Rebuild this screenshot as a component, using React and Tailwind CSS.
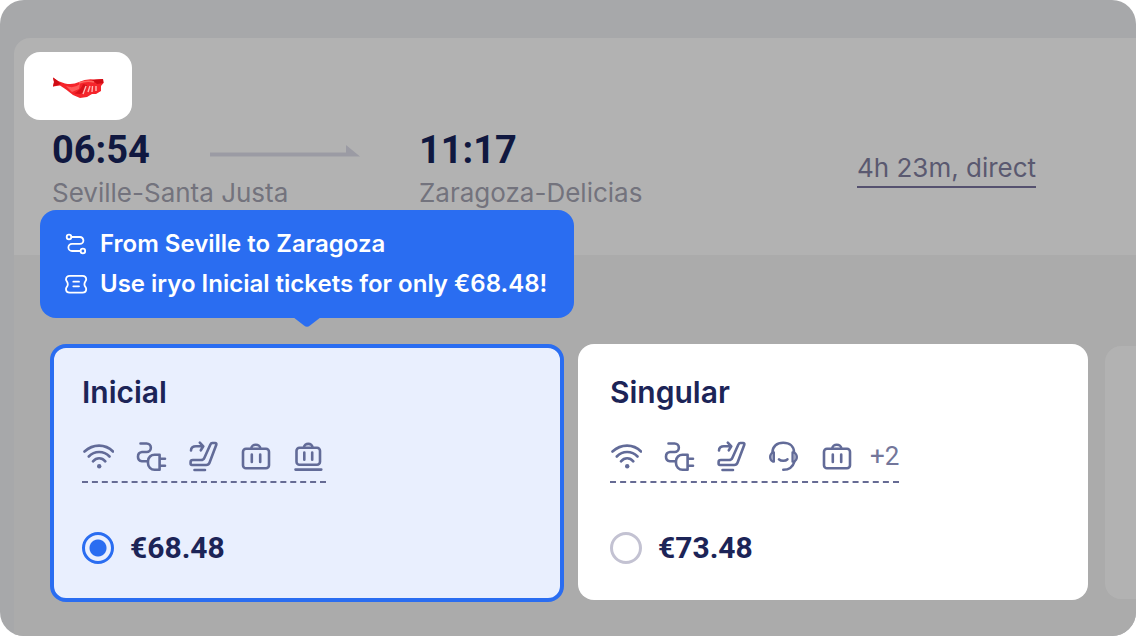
import React from "react";

const stroke = {
  fill: "none",
  stroke: "currentColor",
  strokeWidth: 2.6,
  strokeLinecap: "round",
  strokeLinejoin: "round",
};

function Icon({ children }) {
  return (
    <svg viewBox="0 0 32 32" className="size-8 shrink-0" aria-hidden="true" {...stroke}>
      {children}
    </svg>
  );
}

const Wifi = () => (
  <Icon>
    <path d="M2.500 11.500C11 3.600 23.300 3.600 31 11.500M6.800 16.500C12.500 10.400 21.800 10.400 27.500 16.500M11 21.300C14.500 17.300 19.800 17.300 23.300 21.300" />
    <circle cx="17.200" cy="26.200" r="2.200" fill="currentColor" stroke="none" />
  </Icon>
);

const Plug = () => (
  <Icon>
    <path d="M5.500 3.500H11.600A4.200 4.200 0 0 1 11.600 12H7A4.700 4.700 0 0 0 7 21.300H12.700" />
    <path d="M24.600 14.700H19.500A6.500 6.500 0 0 0 13 21V23.200A6.500 6.500 0 0 0 19.500 29.700H24.600ZM24.600 18.700H30M24.600 25.700H30" />
  </Icon>
);

const Seat = () => (
  <Icon>
    <path d="M3 10.500C3 7.700 5 6.300 8 6.300H15M11.800 2.700L15.300 6.300L12.800 10.300" />
    <path d="M22.500 4.200Q23 3 24.300 3H27Q28.800 3.200 28.300 4.800L21.500 22.800Q20.700 25 18.300 25H3.800Q2.600 25 2.600 23.800V22Q2.600 20 4.800 20H13Q15.500 20 16.300 18ZM6.500 30H17" />
  </Icon>
);

const Bag = () => (
  <Icon>
    <rect x="2" y="8.700" width="26" height="19.500" rx="3" />
    <path d="M10.300 8.500C10.300 3.500 19.300 3.500 19.300 8.500M10.800 14.500V22M19.200 14.500V22" />
  </Icon>
);

const SmallBag = () => (
  <Icon>
    <rect x="2.500" y="7.700" width="23.500" height="17" rx="3" />
    <path d="M10 7.500C10 2.600 18.500 2.600 18.500 7.500M10.300 12.500V19.800M18.200 12.500V19.800M1.500 29.600H27.300" />
  </Icon>
);

const Headset = () => (
  <Icon>
    <path d="M3.500 12.500C3.500 6 8 2.800 14.200 2.800S25 6 25 12.500M25.500 21.500C24 26.500 20 29.800 14.300 29.800" />
    <path d="M10 19.300C12 21.300 16.500 21.300 18.400 19.300" />
    <path d="M5 12.300H3.800Q1 14 1 17T3.800 21.700H5ZM23.400 12.300H25Q28 14 28 17T25 21.700H23.400Z" fill="currentColor" fillOpacity=".6" strokeWidth="2" />
  </Icon>
);

function RouteIcon() {
  return (
    <svg viewBox="0 0 24 24" className="size-6 shrink-0" aria-hidden="true" {...stroke} strokeWidth="1.8">
      <circle cx="5" cy="5" r="2.300" />
      <circle cx="18.900" cy="19" r="2.300" />
      <path d="M7.600 5H16A3.400 3.400 0 0 1 16 11.800H8A3.600 3.600 0 0 0 8 19H16.300" />
    </svg>
  );
}

function TicketIcon() {
  return (
    <svg viewBox="0 0 24 24" className="size-6 shrink-0" aria-hidden="true" {...stroke} strokeWidth="1.800">
      <path d="M5.800 3.800H18.500C21 3.800 22.200 5.400 22.200 7.400C22.200 9 20.400 9.800 20.400 12.200S22.200 15.400 22.200 17C22.200 19 21 20.600 18.500 20.600H5.800C3.300 20.600 2 19 2 17C2 15.400 3.800 14.600 3.800 12.200S2 9 2 7.400C2 5.400 3.300 3.800 5.800 3.800ZM9.300 9.700H15M9.300 14.300H15" />
    </svg>
  );
}

function OperatorLogo() {
  return (
    <svg viewBox="0 0 52 22" className="w-[52px]" role="img" aria-label="iryo">
      <path
        d="M1 0.500L6 4L13 6.500Q21 8 27 5Q34 1.500 42 2.500L51 2L51.500 6L49 9L49 14L44 17L40 17L35 20L28 21L21 18L14 12.500L8 8.500L1 9.500L2 5Z"
        fill="#f5252b"
      />
      <path d="M1 0.500L6 4L9 7L1 9.500L2 5ZM40 3L51 2L51.500 6L45 7Z" fill="#cf0c14" />
      <path d="M14 9Q22 12 28 7L27 12L20 15Z" fill="#ff5a58" />
      <path d="M22 16.500Q29 13 31 7L35 8L33 15L28 17Z" fill="#d91018" />
      <path d="M31 17L34 9M36 15L38 9M40 15L40.500 9M44 14L44 9" fill="none" stroke="#ffb9b6" strokeWidth="1.400" />
      <path d="M27 6Q35 3 42 5" fill="none" stroke="#ff6660" strokeWidth="1.500" />
    </svg>
  );
}

function Tooltip() {
  return (
    <div
      role="tooltip"
      className="absolute bottom-full -left-[10px] mb-[26px] w-[534px] rounded-2xl bg-[#2a6df1] px-6 py-[14px] text-2xl font-semibold whitespace-nowrap text-white"
    >
      <p className="flex h-10 items-center gap-3">
        <RouteIcon />
        From Seville to Zaragoza
      </p>
      <p className="flex h-10 items-center gap-3">
        <TicketIcon />
        Use iryo Inicial tickets for only €68.48!
      </p>
      <svg viewBox="0 0 28 10" className="absolute top-full left-1/2 -mt-px w-7 -translate-x-1/2" aria-hidden="true">
        <path d="M0 0H28L17 8.500Q14 11 11 8.500Z" fill="#2a6df1" />
      </svg>
    </div>
  );
}

function Fare({ name, price, icons, more, selected, onSelect, children }) {
  return (
    <div className="relative shrink-0">
      <label
        className={
          selected
            ? "block h-[258px] w-[514px] cursor-pointer rounded-2xl border-4 border-[#2a6df1] bg-[#e9effe] px-7 pt-6"
            : "block h-64 w-[510px] cursor-pointer rounded-2xl bg-white px-8 pt-7"
        }
      >
        <span className="block text-[30px] leading-10 font-semibold">{name}</span>
        <span className="mt-7 inline-flex h-[43px] items-start gap-4 border-b-2 border-dashed border-[#666b94] text-[#626b98]">
          <span className="flex gap-[21px]">
            {icons.map((Glyph, i) => (
              <Glyph key={i} />
            ))}
          </span>
          {more && <span className="font-['Roboto',sans-serif] text-[26px] leading-8 text-[#73769a]">{more}</span>}
        </span>
        <span className="mt-[45px] flex items-center gap-4">
          <input
            type="radio"
            name="fare"
            checked={selected}
            onChange={onSelect}
            className="size-8 appearance-none rounded-full border-3 border-[#c3c2d2] checked:border-[#2a6df1] checked:bg-[radial-gradient(circle,#2a6df1_8px,transparent_9px)]"
          />
          <span className="font-['Roboto',sans-serif] text-[30px] leading-10 font-bold">{price}</span>
        </span>
      </label>
      {children}
    </div>
  );
}

export default function App() {
  const [fare, setFare] = React.useState("Inicial");
  return (
    <main className="flex min-h-screen flex-col overflow-hidden rounded-3xl bg-[#a7a8aa] pt-[38px] pl-[14px] font-['Inter',sans-serif] text-[#1c2457]">
      <header className="h-[217px] rounded-tl-2xl bg-[#b2b2b2] pt-[14px] pl-[10px]">
        <div className="flex h-17 w-27 items-center justify-center rounded-2xl bg-white pt-1">
          <OperatorLogo />
        </div>
        <div className="grid grid-cols-[158px_209px_438px_1fr] items-center pt-[10px] pl-7 text-[26px] whitespace-nowrap text-[#73737d]">
          <time className="font-['Roboto',sans-serif] text-[38px] leading-10 font-bold text-[#101840]">06:54</time>
          <svg viewBox="0 0 150 14" className="mt-1 w-[150px]" fill="#9b9ba4" aria-hidden="true">
            <path d="M0 7.500H136V0L150 11.500H0Z" />
          </svg>
          <time className="font-['Roboto',sans-serif] text-[38px] leading-10 font-bold text-[#101840]">11:17</time>
          <div className="row-span-2 pb-[10px]">
            <button type="button" className="border-b-2 border-[#55516f] leading-9 text-[#5a5970]">
              4h 23m, direct
            </button>
          </div>
          <span className="col-span-2 leading-[46px]">Seville-Santa Justa</span>
          <span className="leading-[46px]">Zaragoza-Delicias</span>
        </div>
      </header>
      <section aria-label="Fares" className="flex grow items-start gap-[14px] bg-[#ababab] pt-[89px] pb-[34px] pl-9">
        <Fare
          name="Inicial"
          price="€68.48"
          icons={[Wifi, Plug, Seat, Bag, SmallBag]}
          selected={fare === "Inicial"}
          onSelect={() => setFare("Inicial")}
        >
          <Tooltip />
        </Fare>
        <Fare
          name="Singular"
          price="€73.48"
          icons={[Wifi, Plug, Seat, Headset, Bag]}
          more="+2"
          selected={fare === "Singular"}
          onSelect={() => setFare("Singular")}
        />
        <div className="mt-[2px] ml-[3px] h-[253px] w-[510px] shrink-0 rounded-2xl bg-[#b2b2b2]" />
      </section>
    </main>
  );
}
